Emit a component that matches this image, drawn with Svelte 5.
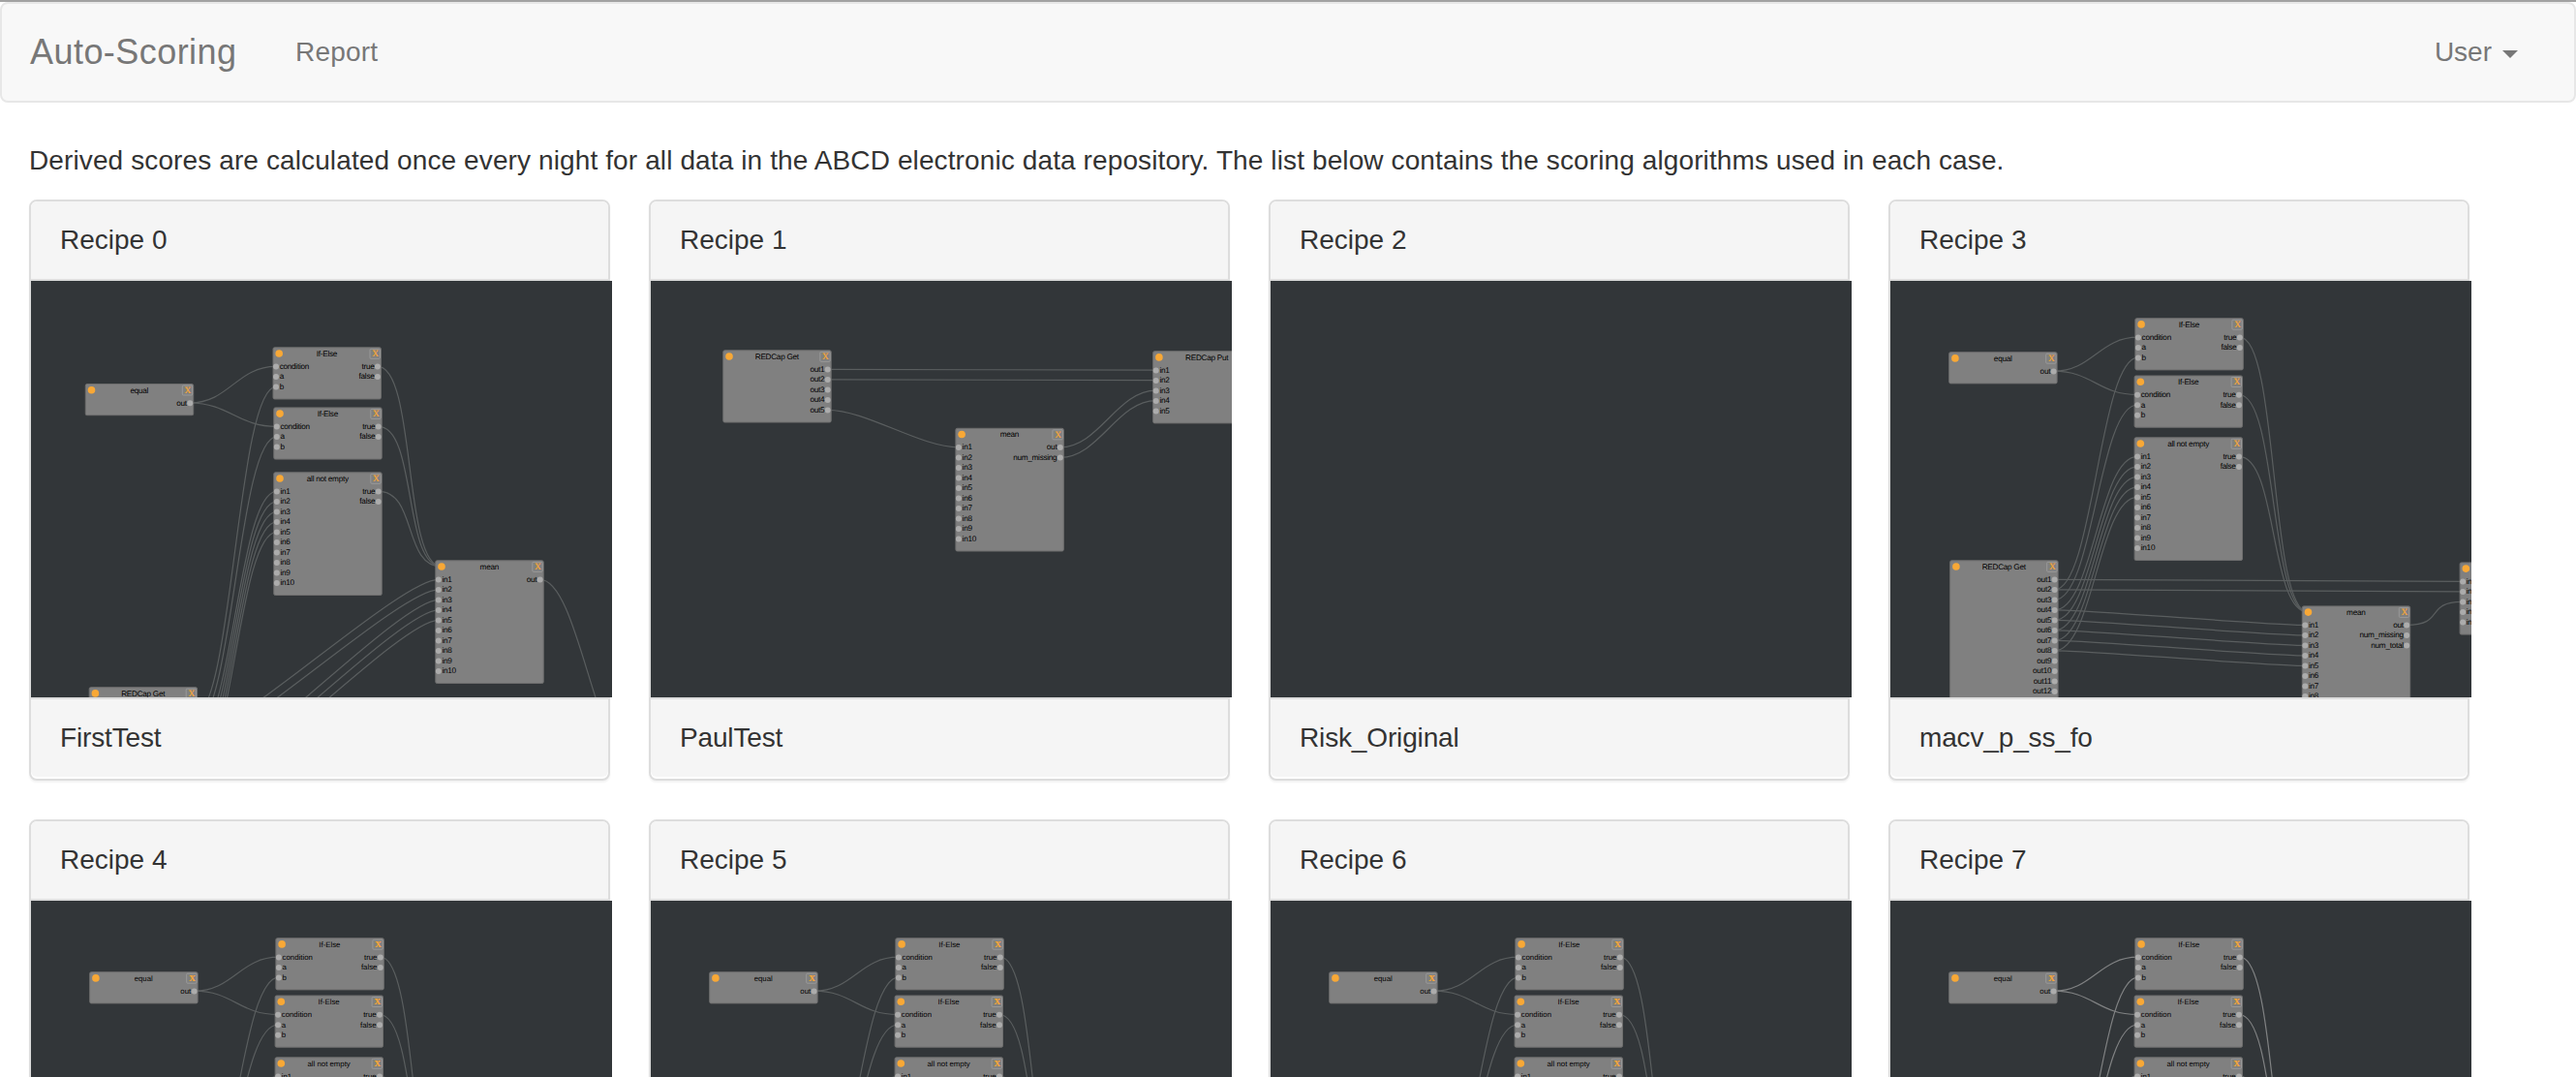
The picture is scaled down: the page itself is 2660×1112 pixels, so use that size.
<script lang="ts">
  type Node = { id: string; title: string; x: number; y: number; ins: string[]; outs: string[] };
  type Link = number[];

  const NODE_W = 112;
  const PORT_TOP = 20;
  const PITCH = 10.5;
  const BEND = 40;

  const series = (prefix: string, n: number) => Array.from({ length: n }, (_, i) => `${prefix}${i + 1}`);
  const node = (id: string, title: string, x: number, y: number, ins: string[], outs: string[]): Node => ({
    id, title, x, y, ins, outs
  });
  const heightOf = (n: Node) => 22.3 + PITCH * Math.max(n.ins.length, n.outs.length);
  const portY = (n: Node, i: number) => n.y + PORT_TOP + PITCH * i;

  // Port index -1 on the target side is the orange status dot in the title row.
  function link(nodes: Node[], from: string, out: number, to: string, input: number): Link {
    const a = nodes.find((n) => n.id === from)!;
    const b = nodes.find((n) => n.id === to)!;
    return [
      a.x + 108.4,
      portY(a, out),
      b.x + (input < 0 ? 6.7 : 3.5),
      input < 0 ? b.y + 6.7 : portY(b, input)
    ];
  }
  const curve = ([x1, y1, x2, y2]: Link) =>
    `M${x1} ${y1}C${x1 + BEND} ${y1} ${x2 - BEND} ${y2} ${x2} ${y2}`;

  // Leaves out the nodes and ports that lie entirely below the visible part of a graph.
  const shownNodes = (nodes: Node[], limit: number) => nodes.filter((n) => n.y < limit);
  const shownPorts = (n: Node, labels: string[], limit: number) =>
    labels.filter((_, i) => portY(n, i) - 3 < limit);

  const branch = ['condition', 'a', 'b'];
  const bool = ['true', 'false'];

  const firstNodes = [
    node('eq', 'equal', 55.8, 106, [], ['out']),
    node('if1', 'If-Else', 249.5, 68.3, branch, bool),
    node('if2', 'If-Else', 250.3, 130.4, branch, bool),
    node('all', 'all not empty', 250.3, 197.3, series('in', 10), bool),
    node('mean', 'mean', 417.3, 288.3, series('in', 10), ['out']),
    node('get', 'REDCap Get', 59.7, 419.2, [], series('out', 12))
  ];
  const firstLinks: Link[] = [
    link(firstNodes, 'eq', 0, 'if1', 0),
    link(firstNodes, 'eq', 0, 'if2', 0),
    link(firstNodes, 'if1', 0, 'mean', -1),
    link(firstNodes, 'if2', 0, 'mean', -1),
    link(firstNodes, 'all', 0, 'mean', -1),
    link(firstNodes, 'get', 1, 'if1', 2),
    link(firstNodes, 'get', 2, 'if2', 1),
    ...[0, 1, 2, 3, 4].map((i) => link(firstNodes, 'get', i + 3, 'all', i)),
    link(firstNodes, 'get', 3, 'mean', 0),
    link(firstNodes, 'get', 4, 'mean', 1),
    link(firstNodes, 'get', 7, 'mean', 2),
    link(firstNodes, 'get', 8, 'mean', 3),
    link(firstNodes, 'get', 9, 'mean', 4),
    [525.7, 308.3, 624, 500]
  ];

  const paulNodes = [
    node('get', 'REDCap Get', 74.3, 71.3, [], series('out', 5)),
    node('mean', 'mean', 314.4, 151.8, series('in', 10), ['out', 'num_missing']),
    node('put', 'REDCap Put', 518.2, 72.2, series('in', 5), [])
  ];
  const paulLinks = [
    link(paulNodes, 'get', 0, 'put', 0),
    link(paulNodes, 'get', 1, 'put', 1),
    link(paulNodes, 'get', 4, 'mean', 0),
    link(paulNodes, 'mean', 0, 'put', 2),
    link(paulNodes, 'mean', 1, 'put', 3)
  ];

  const macvNodes = [
    node('eq', 'equal', 60.2, 73.2, [], ['out']),
    node('if1', 'If-Else', 252.4, 38.2, branch, bool),
    node('if2', 'If-Else', 251.6, 97.5, branch, bool),
    node('all', 'all not empty', 251.6, 161.3, series('in', 10), bool),
    node('get', 'REDCap Get', 61.2, 288.3, [], series('out', 14)),
    node('mean', 'mean', 424.8, 335.4, series('in', 10), ['out', 'num_missing', 'num_total']),
    node('put', 'REDCap Put', 587.6, 290.4, series('in', 5), [])
  ];
  const macvLinks = [
    link(macvNodes, 'eq', 0, 'if1', 0),
    link(macvNodes, 'eq', 0, 'if2', 0),
    link(macvNodes, 'if1', 0, 'mean', -1),
    link(macvNodes, 'if2', 0, 'mean', -1),
    link(macvNodes, 'all', 0, 'mean', -1),
    link(macvNodes, 'get', 0, 'put', 0),
    link(macvNodes, 'get', 1, 'put', 1),
    link(macvNodes, 'get', 1, 'if1', 2),
    link(macvNodes, 'get', 2, 'if2', 1),
    ...[0, 1, 2, 3, 4].map((i) => link(macvNodes, 'get', i + 3, 'all', i)),
    ...[0, 1, 2, 3, 4].map((i) => link(macvNodes, 'get', i + 3, 'mean', i)),
    link(macvNodes, 'mean', 0, 'put', 2)
  ];

  const FULL = 430;
  const CUT = 182;
  const recipes = [
    { name: 'FirstTest', nodes: firstNodes, links: firstLinks, bright: false, limit: FULL },
    { name: 'PaulTest', nodes: paulNodes, links: paulLinks, bright: false, limit: FULL },
    { name: 'Risk_Original', nodes: [] as Node[], links: [] as Link[], bright: false, limit: FULL },
    { name: 'macv_p_ss_fo', nodes: macvNodes, links: macvLinks, bright: false, limit: FULL },
    { name: '', nodes: macvNodes, links: macvLinks, bright: false, limit: CUT },
    { name: '', nodes: macvNodes, links: macvLinks, bright: false, limit: CUT },
    { name: '', nodes: macvNodes, links: macvLinks, bright: false, limit: CUT },
    { name: '', nodes: macvNodes, links: macvLinks, bright: true, limit: CUT }
  ];
</script>

<div class="page">
  <nav class="navbar">
    <span class="brand">Auto-Scoring</span>
    <span class="item">Report</span>
    <span class="item user">User<i class="caret"></i></span>
  </nav>

  <main>
    <p class="intro">Derived scores are calculated once every night for all data in the ABCD electronic data repository. The list below contains the scoring algorithms used in each case.</p>
    <div class="cards">
      {#each recipes as recipe, i}
        <section class="panel">
          <header class="heading">Recipe {i}</header>
          <svg class="graph" class:bright={recipe.bright} class:wide={i > 3} width="600" height="430" viewBox="0 0 600 430">
            <rect class="canvas" width="600" height="430" />
            {#each recipe.links as l}
              <path class="link" d={curve(l)} />
            {/each}
            {#each shownNodes(recipe.nodes, recipe.limit) as n}
              <g transform="translate({n.x} {n.y})">
                <rect class="box" x="0.5" y="0.5" width={NODE_W - 0.6} height={heightOf(n) - 0.6} rx="1.5" />
                <circle class="dot" cx="6.7" cy="6.7" r="3.8" />
                {#if n.x < 560}
                  <text class="label" x="56" y="9.5" text-anchor="middle">{n.title}</text>
                  {#if n.x < 500}
                    <rect class="close" x="100.5" y="2" width="10.4" height="10" rx="1" />
                    <text class="cross" x="106.2" y="9.8" text-anchor="middle">X</text>
                  {/if}
                {/if}
                {#each shownPorts(n, n.ins, recipe.limit) as label, p}
                  <circle class="port" cx="3.5" cy={PORT_TOP + PITCH * p + 0.2} r="3" />
                  <text class="label" x="7.2" y={PORT_TOP + PITCH * p + 2.6}>{label}</text>
                {/each}
                {#each shownPorts(n, n.outs, recipe.limit) as label, p}
                  <circle class="port" cx="108.4" cy={PORT_TOP + PITCH * p + 0.2} r="3" />
                  <text class="label" x="105" y={PORT_TOP + PITCH * p + 2.6} text-anchor="end">{label}</text>
                {/each}
              </g>
            {/each}
          </svg>
          {#if recipe.name}
            <footer class="footer">{recipe.name}</footer>
          {/if}
        </section>
      {/each}
    </div>
  </main>
</div>

<style>
  :global(body) {
    background: #fff;
  }
  .page {
    box-sizing: border-box;
    width: 2660px;
    height: 1112px;
    overflow: hidden;
    border-top: 2px solid #a2a2a2;
    font-family: 'Liberation Sans', Arial, sans-serif;
    font-size: 28px;
    line-height: 40px;
    color: #333;
  }
  .navbar {
    box-sizing: border-box;
    display: flex;
    align-items: center;
    height: 104px;
    padding: 0 58px 0 29px;
    border: 2px solid #e7e7e7;
    border-radius: 8px;
    background: #f8f8f8;
    color: #777;
  }
  .brand {
    width: 274px;
    font-size: 36px;
    letter-spacing: 0.45px;
  }
  .item {
    letter-spacing: 0.2px;
  }
  .user {
    display: flex;
    align-items: center;
    gap: 11px;
    margin-left: auto;
    letter-spacing: 0;
  }
  .caret {
    border: 8px solid transparent;
    border-top-color: #777;
    border-bottom: 0;
    margin-top: 4px;
  }
  main {
    padding: 40px 30px 0;
  }
  .intro {
    margin: 0 0 20px;
    white-space: nowrap;
    letter-spacing: 0.114px;
  }
  .cards {
    display: grid;
    grid-template-columns: repeat(4, 600px);
    gap: 40px;
  }
  .panel {
    box-sizing: border-box;
    display: flex;
    flex-direction: column;
    height: 600px;
    border: 2px solid #ddd;
    border-radius: 8px;
    background: #fff;
    box-shadow: 0 2px 2px rgba(0, 0, 0, 0.05);
  }
  .heading,
  .footer {
    padding: 20px 30px;
    background: #f5f5f5;
  }
  .heading {
    border-bottom: 2px solid #ddd;
    border-radius: 6px 6px 0 0;
  }
  .footer {
    border-top: 2px solid #ddd;
    border-radius: 0 0 6px 6px;
    letter-spacing: -0.15px;
  }
  .graph {
    display: block;
    flex: none;
    text-rendering: geometricPrecision;
  }
  .canvas {
    fill: #323639;
  }
  .link {
    fill: none;
    stroke: #5a5e5f;
    stroke-width: 1.2;
  }
  .bright .link {
    stroke: #808283;
  }
  .box {
    fill: #808080;
    stroke: #6e6e6e;
    stroke-width: 1;
  }
  .dot {
    fill: #f8a836;
  }
  .port {
    fill: #acacac;
  }
  .close {
    fill: none;
    stroke: #9c9c9c;
    stroke-width: 0.9;
  }
  .label {
    font-size: 8.2px;
    letter-spacing: -0.27px;
    fill: #000;
  }
  .wide .label {
    font-size: 7.8px;
    letter-spacing: 0;
  }
  .cross {
    font-family: 'Liberation Serif', serif;
    font-size: 9.4px;
    fill: #f8a836;
    stroke: #f8a836;
    stroke-width: 0.2;
  }
  .wide .cross {
    font-size: 9px;
    font-weight: bold;
  }
</style>
